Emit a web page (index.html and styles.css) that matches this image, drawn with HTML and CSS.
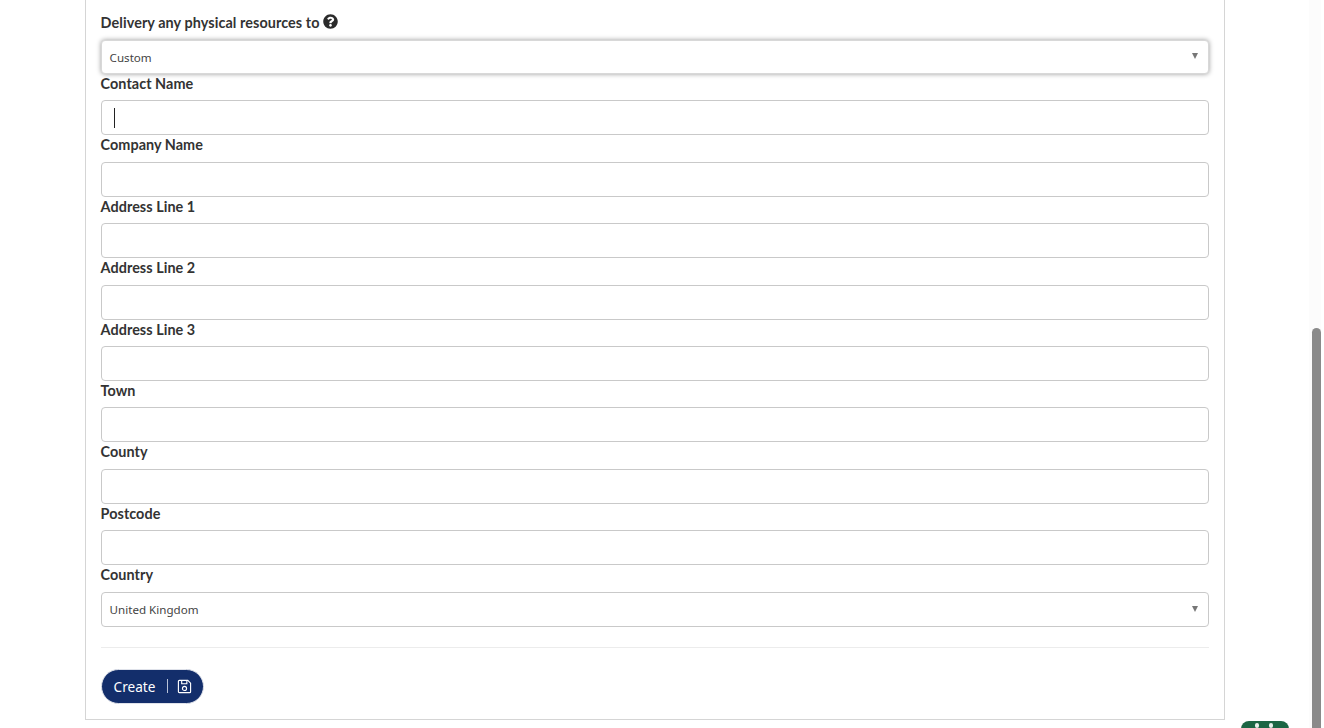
FILE: index.html
```html
<!DOCTYPE html>
<html lang="en">
<head>
<meta charset="utf-8">
<title>Delivery</title>
<link rel="stylesheet" href="styles.css">
</head>
<body>
<main class="card">
  <form class="form">
    <div class="delivery-label">Delivery any physical resources to
      <svg class="help" viewBox="0 0 512 512" width="15" height="15"><path fill="#2b2b2b" d="M504 256c0 137-111 248-248 248S8 393 8 256 119 8 256 8s248 111 248 248zM263 90c-55 0-90 23-117 64-4 5-2 12 3 16l35 26c5 4 13 3 17-2 18-23 30-36 57-36 21 0 46 13 46 33 0 15-12 23-33 34-23 13-54 30-54 71v6c0 7 5 12 12 12h56c7 0 12-5 12-12v-3c0-29 84-30 84-108 0-59-61-101-118-101zm-7 251c-26 0-47 21-47 47s21 47 47 47 47-21 47-47-21-47-47-47z"/></svg>
    </div>
    <div class="select select-focus"><span class="select-text">Custom</span><i class="caret"></i></div>
    <div class="field"><label class="label">Contact Name</label><div class="input"><i class="cursor"></i></div></div>
    <div class="field"><label class="label">Company Name</label><div class="input"></div></div>
    <div class="field"><label class="label">Address Line 1</label><div class="input"></div></div>
    <div class="field"><label class="label">Address Line 2</label><div class="input"></div></div>
    <div class="field"><label class="label">Address Line 3</label><div class="input"></div></div>
    <div class="field"><label class="label">Town</label><div class="input"></div></div>
    <div class="field"><label class="label">County</label><div class="input"></div></div>
    <div class="field"><label class="label">Postcode</label><div class="input"></div></div>
    <div class="field"><label class="label">Country</label><div class="select"><span class="select-text">United Kingdom</span><i class="caret"></i></div></div>
    <hr class="rule">
    <button class="btn" type="button"><span class="btn-text">Create</span><span class="btn-sep"></span>
      <svg class="btn-icon" viewBox="0 0 16 16" width="15" height="15" fill="none" stroke="#fff" stroke-width="1.2"><path d="M2.5 1.5h9l3 3v9a1 1 0 0 1-1 1h-11a1 1 0 0 1-1-1v-11a1 1 0 0 1 1-1z"/><path d="M5 1.5v3.5h5.5v-3.5"/><circle cx="8" cy="10" r="2.2"/></svg>
    </button>
  </form>
</main>
<div class="scrolltrack"><div class="scrollthumb"></div></div>
<div class="chat"><i></i><i></i></div>
</body>
</html>
```
FILE: styles.css
```css
* { box-sizing: border-box; }
html, body { margin: 0; height: 728px; overflow: hidden; background: #fff; }
body { font-family: "Lato", "Liberation Sans", sans-serif; color: #2b2b2b; padding-left: 85px; }
.card { width: 1140px; height: 720px; border: 1px solid #d5d5d5; border-top: 0; padding: 12px 15px 0 14.6px; }
.delivery-label { display: flex; align-items: center; gap: 3px; height: 21px; margin-bottom: 7px; font-size: 14.4px; font-weight: 700; letter-spacing: .08px; color: #333; }
.help { display: block; margin-top: -2px; flex-shrink: 0; }
.select { position: relative; height: 35px; border: 1px solid #c9c9c9; border-radius: 4px; background: #fff; display: flex; align-items: center; padding: 0 8px; font-family: "Noto Sans", sans-serif; font-size: 11.6px; color: #444; }
.select-focus { height: 33.75px; box-shadow: 0 0 5px rgba(0,0,0,.4); border-color: #d8d8d8; }
.select-focus .select-text { margin-top: 1px; }
.caret { position: absolute; right: 10px; top: 50%; margin-top: -3.5px; border-left: 3.5px solid transparent; border-right: 3.5px solid transparent; border-top: 6px solid #777; }
.field { display: block; height: 61.45px; }
.label { display: block; height: 26.45px; padding-top: 1px; font-size: 14.4px; line-height: 18px; font-weight: 700; color: #333; letter-spacing: .05px; }
.input { position: relative; height: 35px; border: 1px solid #c9c9c9; border-radius: 4px; background: #fff; }
.cursor { position: absolute; left: 12px; top: 7px; width: 1px; height: 20px; background: #222; }
.rule { border: 0; border-top: 1px solid #ececec; margin: 20.5px 0 21px; height: 0; }
.btn { display: flex; align-items: center; height: 34.5px; width: 103px; padding: 0 12px; border: 1px solid #dfe2ea; border-radius: 18px; background: #132e6b; color: #fff; font-family: "Noto Sans", sans-serif; font-size: 13.6px; }
.btn-text { line-height: 1; flex-shrink: 0; }
.btn-sep { width: 1px; height: 14px; flex-shrink: 0; background: #b9c2d8; margin: 0 9px 0 12px; }
.btn-icon { display: block; flex-shrink: 0; }
.scrolltrack { position: absolute; top: 0; right: 3px; width: 12px; height: 728px; background: #fcfcfc; }
.scrollthumb { position: absolute; top: 328px; right: 0; width: 9px; height: 400px; background: #8a8a8a; border-radius: 5px 5px 0 0; }
.chat { position: absolute; left: 1241px; top: 721px; width: 48px; height: 16px; background: #1c6644; border-radius: 8px; }
.chat i { position: absolute; top: 2px; width: 4px; height: 5px; border-radius: 2px; background: #e6f0ea; }
.chat i:first-child { left: 14px; }
.chat i:last-child { left: 28px; }
```
